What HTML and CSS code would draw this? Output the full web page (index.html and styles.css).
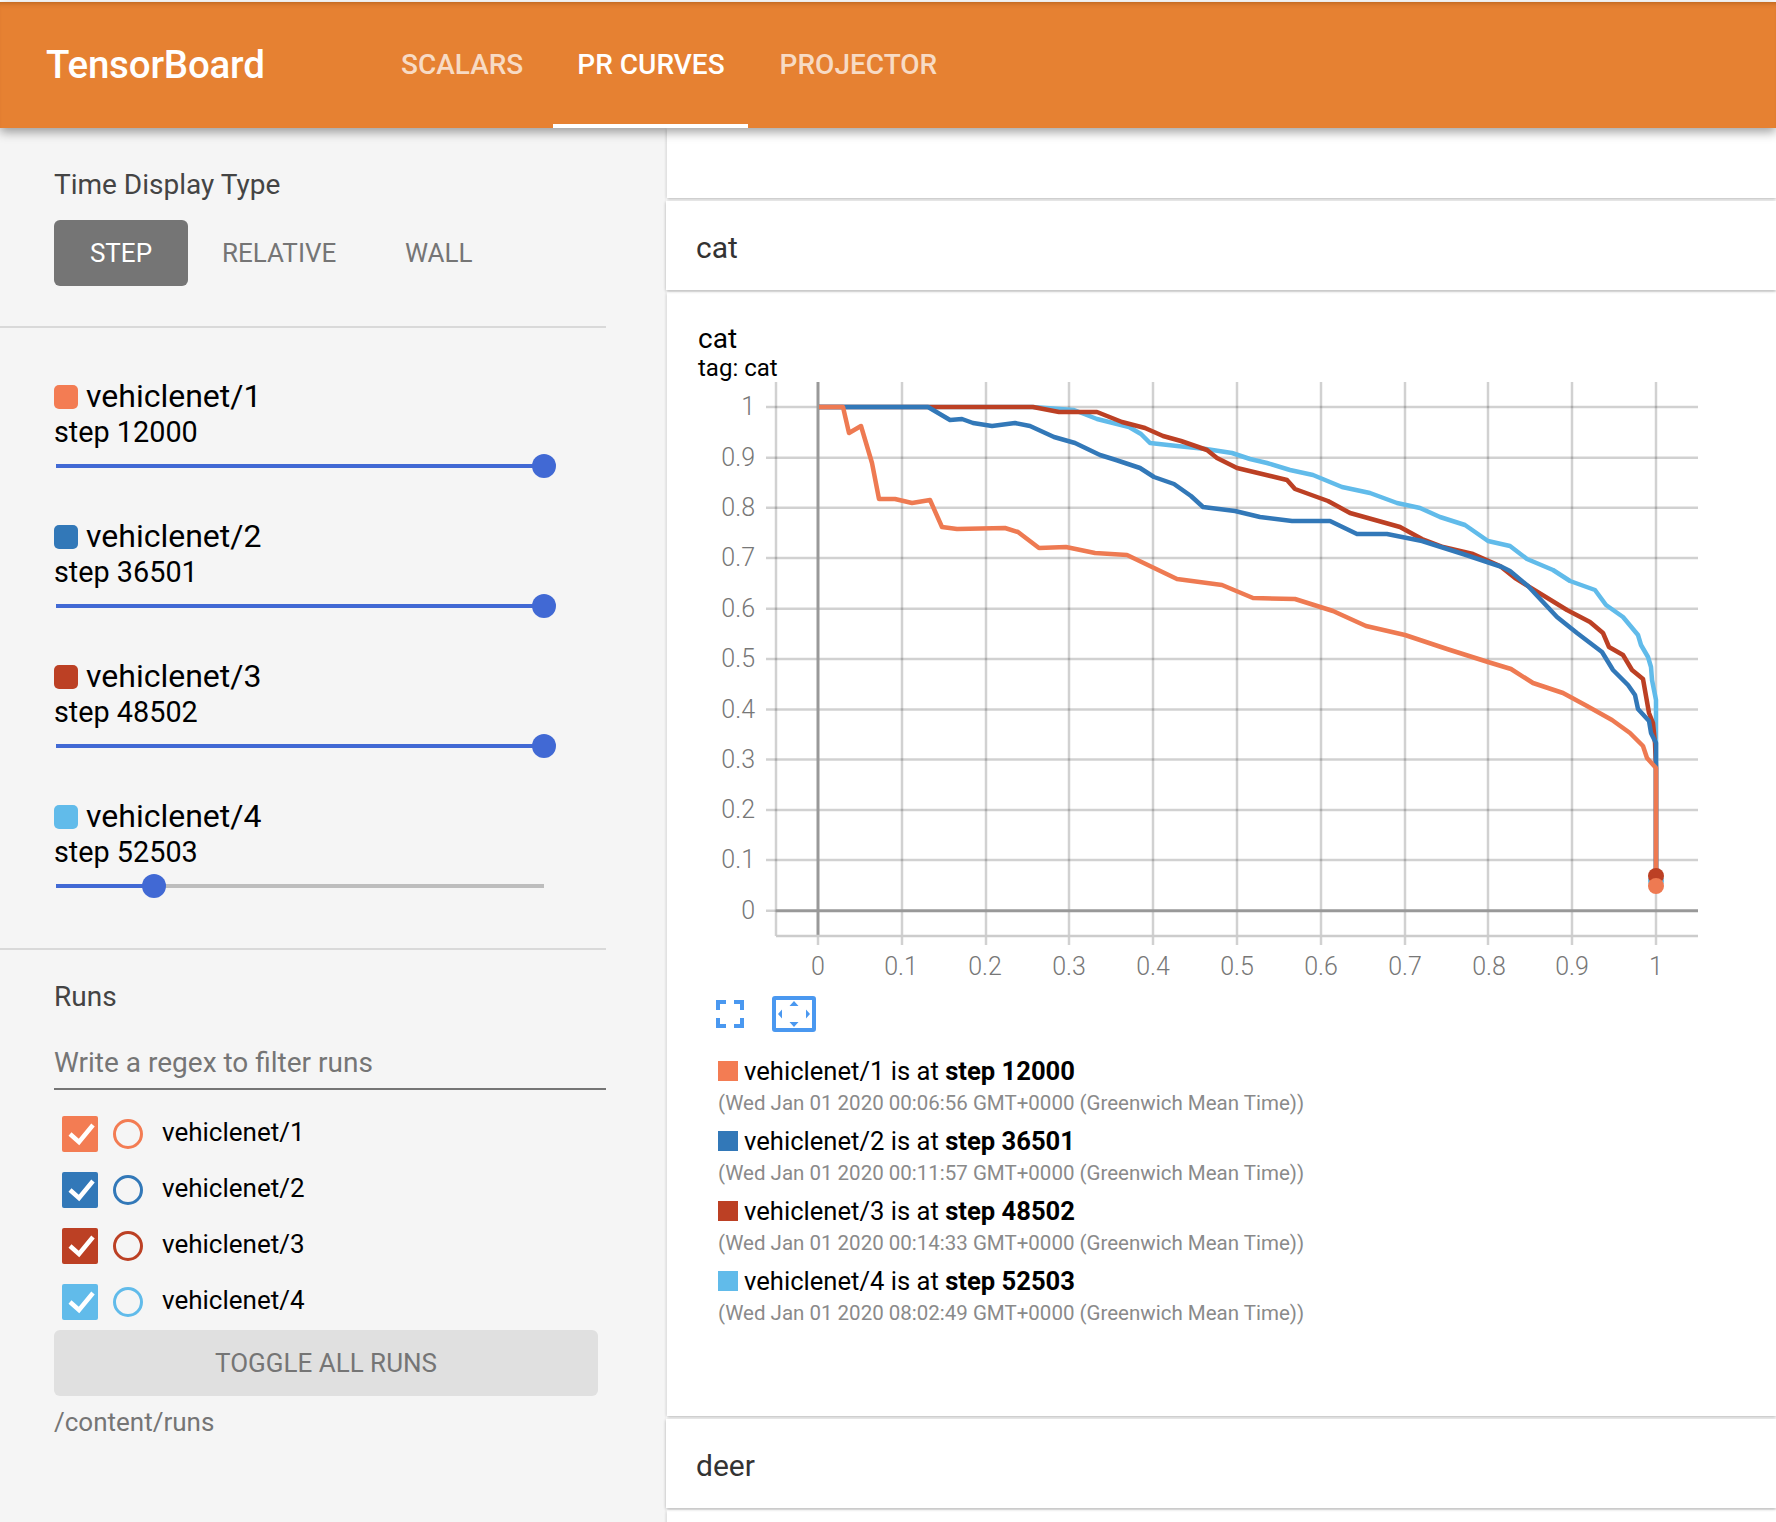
FILE: index.html
```html
<!DOCTYPE html>
<html lang="en">
<head>
<meta charset="UTF-8" />
<title>TensorBoard</title>
<link rel="stylesheet" href="styles.css">
</head>
<body>

<header class="topbar">
  <div class="brand">TensorBoard</div>
  <nav class="tabs">
    <a class="tab">SCALARS</a>
    <a class="tab active">PR CURVES</a>
    <a class="tab">PROJECTOR</a>
  </nav>
</header>

<div class="page">
  <aside class="sidebar">
    <section class="time-type">
      <div class="side-title">Time Display Type</div>
      <div class="time-buttons">
        <span class="time-btn selected">STEP</span>
        <span class="time-btn relative">RELATIVE</span>
        <span class="time-btn wall">WALL</span>
      </div>
    </section>

    <section class="sliders">
      <div class="run-slider">
        <div class="run-name"><i class="swatch c1"></i>vehiclenet/1</div>
        <div class="run-step">step 12000</div>
        <div class="track"><div class="fill full"></div><div class="thumb"></div></div>
      </div>
      <div class="run-slider">
        <div class="run-name"><i class="swatch c2"></i>vehiclenet/2</div>
        <div class="run-step">step 36501</div>
        <div class="track"><div class="fill full"></div><div class="thumb"></div></div>
      </div>
      <div class="run-slider">
        <div class="run-name"><i class="swatch c3"></i>vehiclenet/3</div>
        <div class="run-step">step 48502</div>
        <div class="track"><div class="fill full"></div><div class="thumb"></div></div>
      </div>
      <div class="run-slider">
        <div class="run-name"><i class="swatch c4"></i>vehiclenet/4</div>
        <div class="run-step">step 52503</div>
        <div class="track"><div class="fill" style="width: 20%"></div><div class="thumb"></div></div>
      </div>
    </section>

    <section class="runs">
      <div class="side-title">Runs</div>
      <div class="filter">Write a regex to filter runs</div>
      <div class="run-row">
        <span class="check c1"><svg viewBox="0 0 36 36"><path d="M8 18l9 8L31 9"/></svg></span>
        <span class="radio b1"></span>
        <span class="run-label">vehiclenet/1</span>
      </div>
      <div class="run-row">
        <span class="check c2"><svg viewBox="0 0 36 36"><path d="M8 18l9 8L31 9"/></svg></span>
        <span class="radio b2"></span>
        <span class="run-label">vehiclenet/2</span>
      </div>
      <div class="run-row">
        <span class="check c3"><svg viewBox="0 0 36 36"><path d="M8 18l9 8L31 9"/></svg></span>
        <span class="radio b3"></span>
        <span class="run-label">vehiclenet/3</span>
      </div>
      <div class="run-row">
        <span class="check c4"><svg viewBox="0 0 36 36"><path d="M8 18l9 8L31 9"/></svg></span>
        <span class="radio b4"></span>
        <span class="run-label">vehiclenet/4</span>
      </div>
      <div class="toggle-all">TOGGLE ALL RUNS</div>
      <div class="logdir">/content/runs</div>
    </section>
  </aside>

  <main class="content">
    <div class="card spacer"></div>
    <div class="card category">cat</div>
    <div class="card chart-card">
      <div class="chart-title">cat</div>
      <div class="chart-tag">tag: cat</div>

      <svg class="chart" viewBox="710 380 1000 610">
        <g class="grid">
          <path d="M776 382V936M902 382V945M986 382V945M1069 382V945M1153 382V945M1237 382V945M1321 382V945M1405 382V945M1488 382V945M1572 382V945M1656 382V945M818 936V945"/>
          <path d="M766 407H1698M766 457.7H1698M766 507.7H1698M766 558H1698M766 608.7H1698M766 659H1698M766 709.5H1698M766 759.5H1698M766 810H1698M766 860H1698M766 910.7H776"/>
        </g>
        <path class="axis" d="M818 382V936M776 910.7H1698"/>
        <path class="baseline" d="M776 936H1698"/>

        <g class="labels-y">
          <text x="755" y="415">1</text>
          <text x="755" y="466">0.9</text>
          <text x="755" y="516">0.8</text>
          <text x="755" y="566">0.7</text>
          <text x="755" y="617">0.6</text>
          <text x="755" y="667">0.5</text>
          <text x="755" y="718">0.4</text>
          <text x="755" y="768">0.3</text>
          <text x="755" y="818">0.2</text>
          <text x="755" y="868">0.1</text>
          <text x="755" y="919">0</text>
        </g>
        <g class="labels-x">
          <text x="818" y="975">0</text>
          <text x="901" y="975">0.1</text>
          <text x="985" y="975">0.2</text>
          <text x="1069" y="975">0.3</text>
          <text x="1153" y="975">0.4</text>
          <text x="1237" y="975">0.5</text>
          <text x="1321" y="975">0.6</text>
          <text x="1405" y="975">0.7</text>
          <text x="1489" y="975">0.8</text>
          <text x="1572" y="975">0.9</text>
          <text x="1656" y="975">1</text>
        </g>

        <!-- curves, drawn back to front -->
        <polyline class="curve l4" points="819,407 1032,407 1074,410 1097,419 1129,427 1141,434 1150,443 1177,446 1206,449 1232,453 1250,459 1267,463 1290,470 1313,475 1342,487 1370,493 1397,503 1420,508 1440,517 1465,525 1488,541 1510,546 1527,559 1553,570 1570,581 1595,590 1606,605 1623,617 1638,635 1641,645 1648,657 1651,667 1652,680 1656,700 1656,876"/>
        <polyline class="curve l3" points="819,407 1033,407 1059,412 1097,412 1122,422 1145,428 1163,436 1181,441 1207,450 1217,458 1237,468 1287,480 1295,489 1328,501 1350,513 1400,527 1422,539 1443,547 1473,554 1500,566 1515,578 1567,610 1590,622 1603,633 1609,647 1623,655 1632,670 1643,679 1649,713 1653,723 1655,743 1656,768 1656,876"/>
        <polyline class="curve l2" points="819,407 928,407 950,420 962,419 973,423 992,426 1015,423 1030,426 1054,437 1075,443 1100,455 1116,460 1140,468 1154,477 1174,484 1191,496 1203,507 1235,511 1260,517 1292,521 1330,521 1357,534 1387,534 1422,541 1463,554 1502,567 1510,571 1528,586 1557,617 1577,633 1602,652 1613,670 1628,685 1635,695 1638,709 1649,721 1651,733 1656,743 1656,880"/>
        <polyline class="curve l1" points="819,407 843,407 849,433 861,426 872,463 879,499 895,499 912,503 930,500 942,527 957,529 1005,528 1018,532 1039,548 1066,547 1095,553 1127,555 1152,567 1177,579 1222,585 1253,598 1295,599 1333,611 1366,626 1405,635 1447,649 1488,662 1511,669 1533,683 1563,693 1587,706 1612,720 1630,733 1643,746 1647,758 1656,768 1656,886"/>
        <circle class="dot-l4" cx="1656" cy="881" r="8"/>
        <circle class="dot-l3" cx="1656" cy="876" r="8"/>
        <circle class="dot-l1" cx="1656" cy="886" r="8"/>
      </svg>

      <div class="chart-tools">
        <svg class="tool-fit" viewBox="0 0 28 28"><path d="M2 10V2H10M18 2H26V10M26 18V26H18M10 26H2V18"/></svg>
        <span class="tool-domain">
          <svg viewBox="0 0 36 28">
            <path d="M18 1l4.500 5h-9zM18 27l4.500-5h-9zM2 14l4-4.500v9zM34 14l-4-4.500v9z"/>
          </svg>
        </span>
      </div>

      <div class="legend">
        <div class="legend-row"><i class="legend-swatch c1"></i>vehiclenet/1 is at <b>step 12000</b></div>
        <div class="legend-time">(Wed Jan 01 2020 00:06:56 GMT+0000 (Greenwich Mean Time))</div>
        <div class="legend-row"><i class="legend-swatch c2"></i>vehiclenet/2 is at <b>step 36501</b></div>
        <div class="legend-time">(Wed Jan 01 2020 00:11:57 GMT+0000 (Greenwich Mean Time))</div>
        <div class="legend-row"><i class="legend-swatch c3"></i>vehiclenet/3 is at <b>step 48502</b></div>
        <div class="legend-time">(Wed Jan 01 2020 00:14:33 GMT+0000 (Greenwich Mean Time))</div>
        <div class="legend-row"><i class="legend-swatch c4"></i>vehiclenet/4 is at <b>step 52503</b></div>
        <div class="legend-time">(Wed Jan 01 2020 08:02:49 GMT+0000 (Greenwich Mean Time))</div>
      </div>
    </div>
    <div class="card category">deer</div>
    <div class="card tail"></div>
  </main>
</div>

</body>
</html>
```

FILE: styles.css
```css
html, body { margin: 0; height: 1522px; overflow: hidden; background: #fff; }
body { font-family: Roboto, "Noto Sans", sans-serif; color: #000; padding-top: 2px; box-sizing: border-box; }

/* run colours */
.c1 { background: #f37c53; }
.c2 { background: #3278b8; }
.c3 { background: #bc4024; }
.c4 { background: #61bbea; }

.topbar {
  position: relative;
  z-index: 2;
  display: flex;
  height: 126px;
  background: #e68132;
  box-shadow: 0 4px 10px rgba(0,0,0,.38), inset 0 5px 5px -4px rgba(120,60,0,.45);
  color: #fff;
}
.brand { width: 553px; padding-left: 46px; box-sizing: border-box; font-size: 38.500px; font-weight: 500; line-height: 126px; letter-spacing: -.2px; }
.tabs { display: flex; gap: 6px; margin-left: -176px; }
.tab { padding: 0 24px; font-size: 28px; font-weight: 500; line-height: 126px; color: rgba(255,255,255,.72); }
.tab.active { color: #fff; border-bottom: 4px solid #fff; height: 122px; padding: 0 23px 0 24px; }
.tab.active + .tab { margin-left: 2px; }

.page { display: flex; height: 1394px; }

.sidebar { width: 666px; flex: none; background: #f5f5f5; color: #000; }
.sidebar section { margin-right: 60px; border-bottom: 2px solid #d9d9d9; padding-left: 54px; }
.sidebar section:last-child { border-bottom: 0; }

.side-title { font-size: 28px; color: #444; line-height: 34px; }

.time-type { height: 200px; padding-top: 40px; box-sizing: border-box; }
.time-buttons { display: flex; margin-top: 18px; font-size: 26px; color: #757575; line-height: 66px; }
.time-btn { display: block; text-align: center; }
.time-btn.selected { width: 134px; background: #757575; color: #fff; border-radius: 6px; }
.time-btn.relative { width: 136px; margin-left: 34px; text-align: left; }
.time-btn.wall { margin-left: 47px; }

.sliders { height: 622px; padding-top: 51px; box-sizing: border-box; }
.run-slider { height: 140px; }
.run-name { display: flex; align-items: center; font-size: 32px; line-height: 35px; }
.swatch { width: 24px; height: 24px; border-radius: 5px; margin-right: 8px; }
.run-step { font-size: 28.800px; line-height: 36px; }
.track { position: relative; width: 488px; height: 4px; margin: 14px 0 0 2px; background: #bdbdbd; }
.fill { height: 4px; background: #4169d4; }
.fill.full { width: 100%; }
.thumb { position: absolute; top: -10px; width: 24px; height: 24px; border-radius: 50%; background: #4169d4; }
.fill.full + .thumb { left: 476px; }
.fill:not(.full) + .thumb { left: 86px; }

.runs { padding-top: 30px; }
.filter { margin-top: 25px; height: 49px; line-height: 48px; font-size: 28px; color: #757575; border-bottom: 2px solid #757575; }
.run-row { display: flex; align-items: center; height: 56px; margin-left: 8px; }
.filter + .run-row { margin-top: 16px; }
.check { width: 36px; height: 36px; border-radius: 2px; }
.check svg { display: block; width: 36px; height: 36px; fill: none; stroke: #fff; stroke-width: 4.500; }
.radio { width: 30px; height: 30px; margin-left: 15px; border: 3px solid; border-radius: 50%; box-sizing: border-box; }
.b1 { border-color: #f37c53; }
.b2 { border-color: #3278b8; }
.b3 { border-color: #bc4024; }
.b4 { border-color: #61bbea; }
.run-label { margin-left: 19px; font-size: 26px; margin-top: -5px; }
.toggle-all { width: 544px; height: 66px; background: #e0e0e0; border-radius: 6px; color: #757575; font-size: 26px; line-height: 66px; text-align: center; }
.logdir { margin-top: 7px; color: #757575; font-size: 26px; line-height: 38px; }

.content { flex: 1; min-width: 0; }
.card { background: #fff; box-shadow: 0 1px 3px rgba(0,0,0,.3); }
.spacer { height: 70px; margin-left: 1px; }
.category { height: 89px; margin-top: 3px; padding-left: 30px; font-size: 30px; line-height: 94px; color: #333; position: relative; }
.chart-card { height: 1124px; margin-top: 2px; margin-left: 1px; padding: 31px 0 0 31px; box-sizing: border-box; }
.chart-title { font-size: 28px; line-height: 32px; }
.chart-tag { font-size: 24px; line-height: 27px; }

.chart { display: block; width: 1000px; height: 610px; margin: -2px 0 0 12px; }
.grid path { fill: none; stroke: rgba(0,0,0,.18); stroke-width: 2.500; }
.axis { fill: none; stroke: #999; stroke-width: 3; }
.baseline { fill: none; stroke: #ccc; stroke-width: 2.500; }
.labels-y text { text-anchor: end; font-size: 25px; font-weight: 300; fill: #777; }
.labels-x text { text-anchor: middle; font-size: 25px; font-weight: 300; fill: #777; }
.curve { fill: none; stroke-width: 4.500; stroke-linejoin: round; }
.l1 { stroke: #ee7a52; }
.l2 { stroke: #3278b8; }
.l3 { stroke: #bc4024; }
.l4 { stroke: #61bbea; }
.dot-l1 { fill: #ee7a52; }
.dot-l3 { fill: #bc4024; }
.dot-l4 { fill: #61bbea; }

.chart-tools { display: flex; align-items: center; margin: 6px 0 0 18px; }
.tool-fit { width: 28px; height: 28px; fill: none; stroke: #4a98f0; stroke-width: 4; }
.tool-domain { width: 44px; height: 36px; margin-left: 28px; border: 4px solid #4a98f0; border-radius: 3px; box-sizing: border-box; }
.tool-domain svg { display: block; width: 36px; height: 28px; fill: #4a98f0; }

.legend { margin: 21px 0 0 20px; }
.legend-row { display: flex; align-items: center; height: 36px; font-size: 25.600px; white-space: pre; }
.legend-swatch { width: 20px; height: 20px; margin-right: 6px; }
.legend-time { height: 34px; line-height: 28px; font-size: 20.500px; color: #8a8a8a; }

.tail { height: 40px; margin-top: 2px; margin-left: 1px; }
```
